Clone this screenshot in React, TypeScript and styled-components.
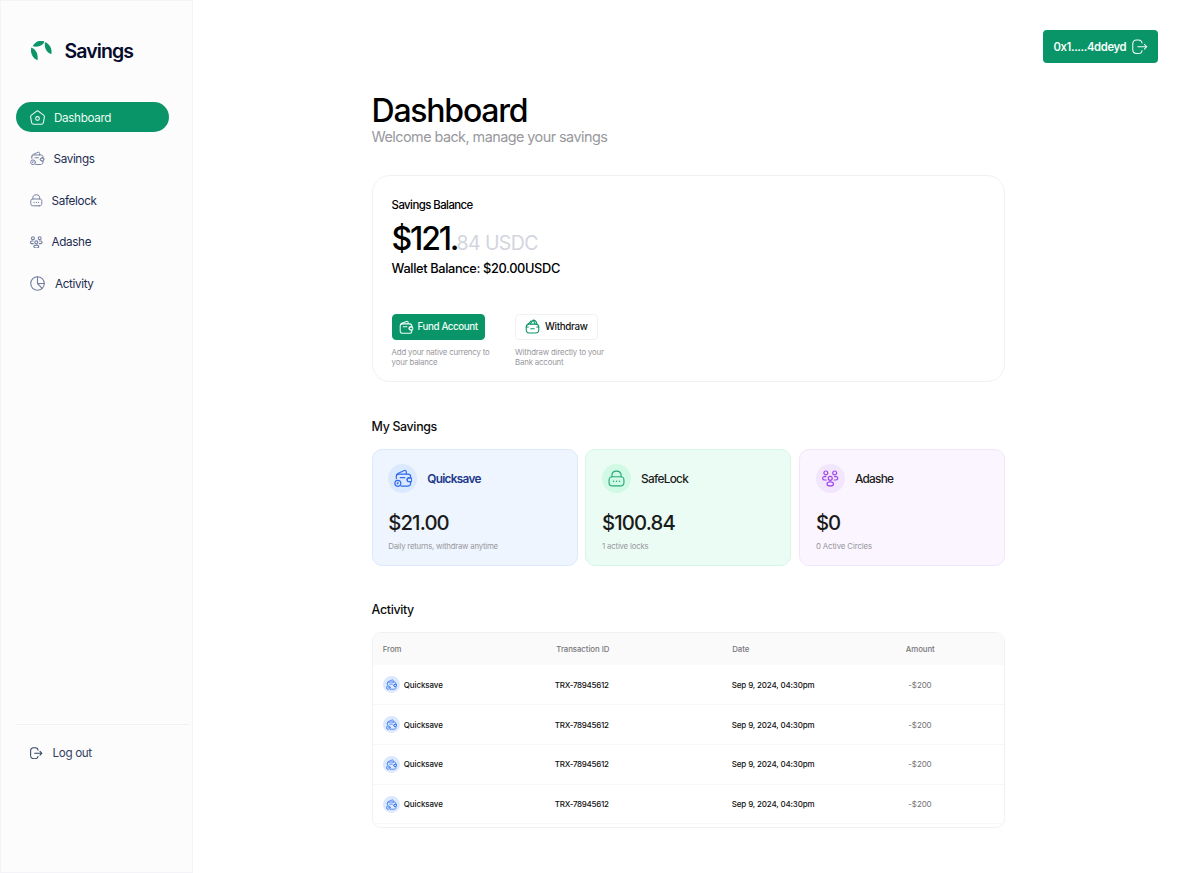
import React from "react";
import styled, { createGlobalStyle, css } from "styled-components";

const GlobalStyle = createGlobalStyle`
  *, *::before, *::after { box-sizing: border-box; }
  body { margin: 0; background: #fff; font-family: Inter, "Liberation Sans", sans-serif; color: #0c0c0c; }
  p, h1, h2, h3 { margin: 0; font-weight: 500; white-space: nowrap; }
  button, a { font-family: inherit; text-decoration: none; white-space: nowrap; }
  svg { display: block; flex: none; }
`;

const green = "#0a9568";

const Page = styled.div`
  display: flex;
  width: 1200px;
  height: 873px;
  background: #fff;
  overflow: hidden;
`;

/* Sidebar */
const Sidebar = styled.aside`
  display: flex;
  flex-direction: column;
  width: 192.5px;
  height: 873px;
  border: 1px solid #f3f3f8;
  background: #fcfcfd;
`;

const Brand = styled.div`
  display: flex;
  align-items: center;
  gap: 12.5px;
  padding: 35px 0 0 30px;
  height: 64px;
`;

const BrandName = styled.span`
  font-size: 19.5px;
  line-height: 26px;
  font-weight: 600;
  letter-spacing: -0.92px;
  color: #060b2b;
`;

const Nav = styled.nav`
  display: flex;
  flex-direction: column;
  gap: 11.65px;
  padding: 37px 0 0 15px;
`;

const NavItem = styled.a<{ $active?: boolean; $gap: number }>`
  display: flex;
  align-items: center;
  gap: ${(p) => p.$gap}px;
  width: 153px;
  height: 30px;
  padding-left: 14px;
  border-radius: 15px;
  font-size: 11.7px;
  line-height: 16px;
  letter-spacing: -0.36px;
  background: ${(p) => (p.$active ? green : "transparent")};
  color: ${(p) => (p.$active ? "#e9fbf3" : "#1d2d50")};
  svg { color: ${(p) => (p.$active ? "#e9fbf3" : "#7480a0")}; }
`;

const NavLabel = styled.span`
  padding-top: 1px;
`;

const SidebarFoot = styled.div`
  margin: auto 3px 104px 15px;
  padding-top: 13px;
  border-top: 1px solid #f1f1f4;
`;

const LogoutLink = styled(NavItem)`
  color: #33425f;
  svg { color: #33425f; }
`;

/* Main */
const Main = styled.main`
  display: flex;
  flex-direction: column;
  flex: 1;
`;

const TopBar = styled.header`
  display: flex;
  justify-content: flex-end;
  padding: 30px 42px 0 0;
  height: 95px;
`;

const AccountButton = styled.button`
  display: flex;
  align-items: center;
  justify-content: space-between;
  width: 115px;
  height: 33.3px;
  padding: 0 10.5px;
  border: 0;
  border-radius: 4px;
  background: ${green};
  color: #f4fdf9;
  font-size: 11.3px;
  font-weight: 600;
  letter-spacing: -0.4px;
`;

const Content = styled.div`
  width: 633px;
  margin-left: 179.1px;
`;

const Title = styled.h1`
  font-size: 32px;
  line-height: 32px;
  letter-spacing: -1.25px;
  color: #000;
`;

const Subtitle = styled.p`
  font-size: 14.4px;
  line-height: 20px;
  font-weight: 400;
  letter-spacing: -0.54px;
  color: #98989d;
`;

const BalanceCard = styled.section`
  margin-top: 28px;
  height: 207px;
  padding: 21px 0 0 19px;
  border: 1px solid #f1f1f4;
  border-radius: 18px;
`;

const BalanceLabel = styled.p`
  font-size: 11.4px;
  line-height: 16px;
  letter-spacing: -0.56px;
  color: #000;
`;

const Balance = styled.p`
  display: flex;
  align-items: baseline;
  height: 36px;
  margin-top: 8px;
  font-size: 32px;
  line-height: 36px;
  letter-spacing: -2.2px;
  color: #000;
`;

const Cents = styled.span`
  margin-left: -0.7px;
  font-size: 19.5px;
  font-weight: 400;
  letter-spacing: -0.6px;
  color: #d3d5de;
`;

const WalletBalance = styled.p`
  margin-top: 3.5px;
  font-size: 12.8px;
  line-height: 16px;
  letter-spacing: -0.36px;
  color: #000;
`;

const Actions = styled.div`
  display: flex;
  margin-top: 37px;
`;

const Action = styled.div`
  width: 123.5px;
`;

const ActionButton = styled.button<{ $primary?: boolean }>`
  display: flex;
  align-items: center;
  gap: ${(p) => (p.$primary ? 4 : 5)}px;
  width: ${(p) => (p.$primary ? 93.4 : 83)}px;
  height: 26.5px;
  padding: 0 0 0 ${(p) => (p.$primary ? 6.5 : 9)}px;
  border: 1px solid ${(p) => (p.$primary ? green : "#f0f1f3")};
  border-radius: 4px;
  background: ${(p) => (p.$primary ? green : "#fff")};
  color: ${(p) => (p.$primary ? "#eefcf6" : "#111")};
  font-size: 9.8px;
  font-weight: 500;
  letter-spacing: ${(p) => (p.$primary ? -0.42 : -0.32)}px;
  svg { color: ${(p) => (p.$primary ? "#eefcf6" : green)}; }
`;

const Hint = styled.p`
  margin-top: 6.5px;
  font-size: 7.8px;
  line-height: 10.4px;
  font-weight: 400;
  letter-spacing: -0.16px;
  color: #97979d;
`;

const SectionTitle = styled.h2<{ $top: number }>`
  margin-top: ${(p) => p.$top}px;
  font-size: 12.4px;
  line-height: 16px;
  letter-spacing: -0.34px;
  color: #0c0c0c;
`;

const Cards = styled.div`
  display: grid;
  grid-template-columns: repeat(3, 206px);
  gap: 7.8px;
  margin-top: 14px;
`;

type Tone = { bg: string; line: string; disc: string; ink: string; title: string };

const tones: Record<"blue" | "green" | "purple", Tone> = {
  blue: { bg: "#eff5ff", line: "#dbe8fe", disc: "#dbe9fe", ink: "#2f6bea", title: "#1e3a8a" },
  green: { bg: "#ebfcf4", line: "#d5f8e6", disc: "#d1fae5", ink: "#27a77a", title: "#1b1b1b" },
  purple: { bg: "#faf5ff", line: "#f1e6fe", disc: "#f1e6fe", ink: "#a044ea", title: "#1b1b1b" },
};

const SavingCard = styled.article<{ $tone: Tone }>`
  height: 117px;
  padding: 14px 0 0 15.7px;
  border: 1px solid ${(p) => p.$tone.line};
  border-radius: 10px;
  background: ${(p) => p.$tone.bg};
`;

const CardHead = styled.div`
  display: flex;
  align-items: center;
  gap: 10px;
`;

const Disc = styled.span<{ $size: number; $tone: Tone }>`
  display: flex;
  align-items: center;
  justify-content: center;
  width: ${(p) => p.$size}px;
  height: ${(p) => p.$size}px;
  border-radius: 50%;
  background: ${(p) => p.$tone.disc};
  color: ${(p) => p.$tone.ink};
`;

const CardTitle = styled.h3<{ $tone: Tone; $bold?: boolean }>`
  font-size: 11.8px;
  line-height: 16px;
  font-weight: ${(p) => (p.$bold ? 600 : 500)};
  letter-spacing: -0.7px;
  color: ${(p) => p.$tone.title};
`;

const CardAmount = styled.p`
  margin-top: 17.5px;
  font-size: 20.3px;
  line-height: 24px;
  letter-spacing: -0.88px;
  color: #1a1a1a;
`;

const CardNote = styled.p<{ $tracking?: number }>`
  margin-top: 6px;
  font-size: 7.8px;
  line-height: 11px;
  font-weight: 400;
  letter-spacing: ${(p) => p.$tracking ?? -0.19}px;
  color: #97979d;
`;

/* Activity table */
const columns = css`
  display: grid;
  grid-template-columns: 172px 177px 176.5px 1fr;
  align-items: center;
  padding-left: 10.2px;
`;

const Table = styled.section`
  margin-top: 14.5px;
  height: 196px;
  border: 1px solid #f1f1f3;
  border-radius: 9px;
  overflow: hidden;
`;

const TableHead = styled.div`
  ${columns}
  grid-template-columns: 173.5px 176px 173.5px 1fr;
  height: 32.2px;
  padding-bottom: 1px;
  background: #fafafa;
  font-size: 7.8px;
  font-weight: 500;
  letter-spacing: -0.05px;
  color: #77777b;
`;

const TableRow = styled.div`
  ${columns}
  height: 39.8px;
  padding-top: 0.4px;
  border-bottom: 1px solid #f8f8f9;
  font-size: 8px;
  font-weight: 500;
  color: #111;
`;

const Source = styled.span`
  display: flex;
  align-items: center;
  gap: 4px;
  letter-spacing: -0.1px;
`;

const TransactionId = styled.span`
  letter-spacing: -0.28px;
`;

const DateTime = styled.span`
  letter-spacing: -0.15px;
`;

const Amount = styled.span`
  font-weight: 400;
  letter-spacing: -0.1px;
  color: #6f6f73;
`;

/* Icons */
type IconProps = { size: number; weight?: number };

const Icon = ({ size, weight = 1.5, children }: IconProps & { children: React.ReactNode }) => (
  <svg width={size} height={size} viewBox="0 0 24 24" fill="none" stroke="currentColor" strokeWidth={weight} strokeLinecap="round" strokeLinejoin="round">
    {children}
  </svg>
);

const Logo = () => (
  <svg width="21" height="20" viewBox="0 0 21 20" fill={green}>
    <path d="M0.3 6.6C5 8.4 7.4 13.4 6.5 19.2C1.6 17.6 -0.9 12 0.3 6.6Z" />
    <path d="M1.6 5.2C4.600 -0.100 9.600 -1.200 13.400 0.600C12.200 4.800 6.800 6.600 1.600 5.200Z" />
    <path d="M14 1.200C18.800 2.800 21.400 7.800 20.300 13.200C15.400 11.600 13 6.600 14 1.200Z" />
  </svg>
);

const HomeIcon = (p: IconProps) => (
  <Icon {...p}>
    <path d="M10.2 2.1 2.2 8.3c-.9.7-1.4 2.1-1.2 3.2l1.6 8.6c.3 1.5 1.7 2.6 3.2 2.6h12.4c1.5 0 2.9-1.1 3.2-2.6l1.6-8.6c.2-1.1-.3-2.5-1.2-3.2l-8-6.2c-1-.8-2.6-.8-3.6 0Z" />
    <circle cx="12" cy="13.6" r="3" />
  </Icon>
);

const WalletCoinIcon = (p: IconProps) => (
  <Icon {...p}>
    <path d="M3 12.6V9.8C3 7.7 4.3 6.6 6.4 6.6H18c2.4 0 3.6 1.3 3.6 3.5v1.5h-2c-1.5 0-2.6 1-2.6 2.4s1.1 2.5 2.6 2.5h2v1.8c0 2.6-1.4 4-4 4H9.4" />
    <path d="M3.1 9.2c0-1.6.9-3.1 2.4-3.7l8-3.500c1.2-.5 2.5.5 2.5 1.8v2.800" />
    <path d="M22.9 13.1v1.9c0 .8-.6 1.4-1.4 1.4h-1.900c-1.4 0-2.5-1-2.6-2.2-.1-1.4 1-2.6 2.4-2.6h2.1c.8 0 1.4.7 1.4 1.5Z" />
    <path d="M8 11.2h6" />
    <circle cx="5" cy="18.600" r="3.900" />
    <path d="M5.100 17.100v1.400l-1 .7" />
  </Icon>
);

const WalletIcon = (p: IconProps) => (
  <Icon {...p}>
    <path d="M2 12V9.9C2 7.7 3.4 6.4 5.5 6.4H17.5c2.4 0 3.7 1.3 3.7 3.6v1.4h-2c-1.5 0-2.6 1.1-2.6 2.5s1.1 2.6 2.6 2.6h2v1.6c0 2.6-1.5 4-4 4H6.2c-2.7 0-4.2-1.4-4.2-4.1V9.2c0-1.7 1-3.1 2.6-3.7l7.9-3.1c1.3-.5 2.6.5 2.6 1.8v2.2" />
    <path d="M22.8 12.9v2c0 .8-.6 1.5-1.5 1.5h-2.1c-1.4 0-2.5-1-2.6-2.3-.1-1.5 1-2.7 2.5-2.7h2.2c.9 0 1.5.7 1.5 1.5Z" />
    <path d="M7 11.2h6" />
  </Icon>
);

const WithdrawIcon = (p: IconProps) => (
  <Icon {...p}>
    <path d="M2 13c0-3.1 1.6-4.8 4.5-4.8h11C20.4 8.2 22 9.9 22 13v4.3c0 3.2-1.6 5.1-4.8 5.1H6.8C3.6 22.4 2 20.5 2 17.3V13Z" />
    <path d="M3.8 9.2 9.8 3M8.2 8 13 1.8c2.9 0 5.4 2 6.200 6.700M13.200 2l3 6" />
    <path d="M1.800 12.700h3.500M18.700 12.700h3.500M9.200 15.600h5.600" />
  </Icon>
);

const LockIcon = (p: IconProps) => (
  <Icon {...p}>
    <path d="M5.500 9.500V7.500c0-3.500 1.500-6 6.500-6s6.500 2.500 6.500 6v2" />
    <path d="M17.500 22.500h-11c-4 0-5-1.200-5-5v-3c0-4 1-5 5-5h11c4 0 5 1 5 5v3c0 3.800-1 5-5 5Z" />
    <path strokeWidth="2.200" d="M7.800 16h.01M12 16h.01M16.200 16h.01" />
  </Icon>
);

const PeopleIcon = (p: IconProps) => (
  <Icon {...p}>
    <circle cx="5.6" cy="4.2" r="2.8" />
    <circle cx="18.4" cy="4.2" r="2.8" />
    <circle cx="12" cy="12.1" r="2.9" />
    <path d="M6.3 14.6H3.8C2.2 14.6 1 13.500 1 12.100c0-1.300.9-2.300 2.200-2.500h2.600" />
    <path d="M17.700 14.600h2.500c1.600 0 2.800-1.100 2.800-2.500 0-1.300-.9-2.300-2.200-2.500h-2.600" />
    <ellipse cx="12" cy="20.200" rx="4.700" ry="2.900" />
  </Icon>
);

const PieIcon = (p: IconProps) => (
  <Icon {...p}>
    <circle cx="12" cy="12" r="10.8" />
    <path d="M12 1.200V12h10.800M12 12l7.400 7.800" />
  </Icon>
);

const ExitIcon = (p: IconProps) => (
  <Icon {...p}>
    <path d="M15.5 6.3C15.2 3 13.5 1.6 9.8 1.6H7.4C3 1.6 1.2 3.4 1.2 7.8v8.4c0 4.4 1.8 6.2 6.2 6.2h2.4c3.7 0 5.4-1.4 5.7-4.7" />
    <path d="M9 12h13.5M19.2 8.3 22.9 12l-3.7 3.7" />
  </Icon>
);

const rows = [0, 1, 2, 3];

export default function App() {
  return (
    <Page>
      <GlobalStyle />
      <Sidebar>
        <Brand>
          <Logo />
          <BrandName>Savings</BrandName>
        </Brand>
        <Nav>
          <NavItem $active $gap={9}><HomeIcon size={15} weight={1.7} /><NavLabel>Dashboard</NavLabel></NavItem>
          <NavItem $gap={9}><WalletCoinIcon size={14.5} weight={1.6} /><NavLabel>Savings</NavLabel></NavItem>
          <NavItem $gap={9}><LockIcon size={12.6} weight={1.9} /><NavLabel>Safelock</NavLabel></NavItem>
          <NavItem $gap={9}><PeopleIcon size={12.6} weight={2.1} /><NavLabel>Adashe</NavLabel></NavItem>
          <NavItem $gap={10}><PieIcon size={15} weight={1.8} /><NavLabel>Activity</NavLabel></NavItem>
        </Nav>
        <SidebarFoot>
          <LogoutLink $gap={10}><ExitIcon size={12.5} weight={2} />Log out</LogoutLink>
        </SidebarFoot>
      </Sidebar>
      <Main>
        <TopBar>
          <AccountButton>0x1.....4ddeyd<ExitIcon size={15.5} weight={1.6} /></AccountButton>
        </TopBar>
        <Content>
          <Title>Dashboard</Title>
          <Subtitle>Welcome back, manage your savings</Subtitle>
          <BalanceCard>
            <BalanceLabel>Savings Balance</BalanceLabel>
            <Balance>$121.<Cents>84 USDC</Cents></Balance>
            <WalletBalance>Wallet Balance: $20.00USDC</WalletBalance>
            <Actions>
              <Action>
                <ActionButton $primary><WalletIcon size={14.5} weight={1.7} />Fund Account</ActionButton>
                <Hint>Add your native currency to<br />your balance</Hint>
              </Action>
              <Action>
                <ActionButton><WithdrawIcon size={15} weight={1.7} />Withdraw</ActionButton>
                <Hint>Withdraw directly to your<br />Bank account</Hint>
              </Action>
            </Actions>
          </BalanceCard>

          <SectionTitle $top={37}>My Savings</SectionTitle>
          <Cards>
            <SavingCard $tone={tones.blue}>
              <CardHead>
                <Disc $size={29} $tone={tones.blue}><WalletCoinIcon size={18.5} /></Disc>
                <CardTitle $tone={tones.blue} $bold>Quicksave</CardTitle>
              </CardHead>
              <CardAmount>$21.00</CardAmount>
              <CardNote $tracking={-0.22}>Daily returns, withdraw anytime</CardNote>
            </SavingCard>
            <SavingCard $tone={tones.green}>
              <CardHead>
                <Disc $size={29} $tone={tones.green}><LockIcon size={17} weight={1.6} /></Disc>
                <CardTitle $tone={tones.green}>SafeLock</CardTitle>
              </CardHead>
              <CardAmount>$100.84</CardAmount>
              <CardNote>1 active locks</CardNote>
            </SavingCard>
            <SavingCard $tone={tones.purple}>
              <CardHead>
                <Disc $size={29} $tone={tones.purple}><PeopleIcon size={16.5} weight={1.7} /></Disc>
                <CardTitle $tone={tones.purple}>Adashe</CardTitle>
              </CardHead>
              <CardAmount>$0</CardAmount>
              <CardNote $tracking={-0.1}>0 Active Circles</CardNote>
            </SavingCard>
          </Cards>

          <SectionTitle $top={35.5}>Activity</SectionTitle>
          <Table>
            <TableHead>
              <span>From</span>
              <span>Transaction ID</span>
              <span>Date</span>
              <span>Amount</span>
            </TableHead>
            {rows.map((i) => (
              <TableRow key={i}>
                <Source><Disc $size={17} $tone={tones.blue}><WalletCoinIcon size={11} weight={1.6} /></Disc>Quicksave</Source>
                <TransactionId>TRX-78945612</TransactionId>
                <DateTime>Sep 9, 2024, 04:30pm</DateTime>
                <Amount>-$200</Amount>
              </TableRow>
            ))}
          </Table>
        </Content>
      </Main>
    </Page>
  );
}
